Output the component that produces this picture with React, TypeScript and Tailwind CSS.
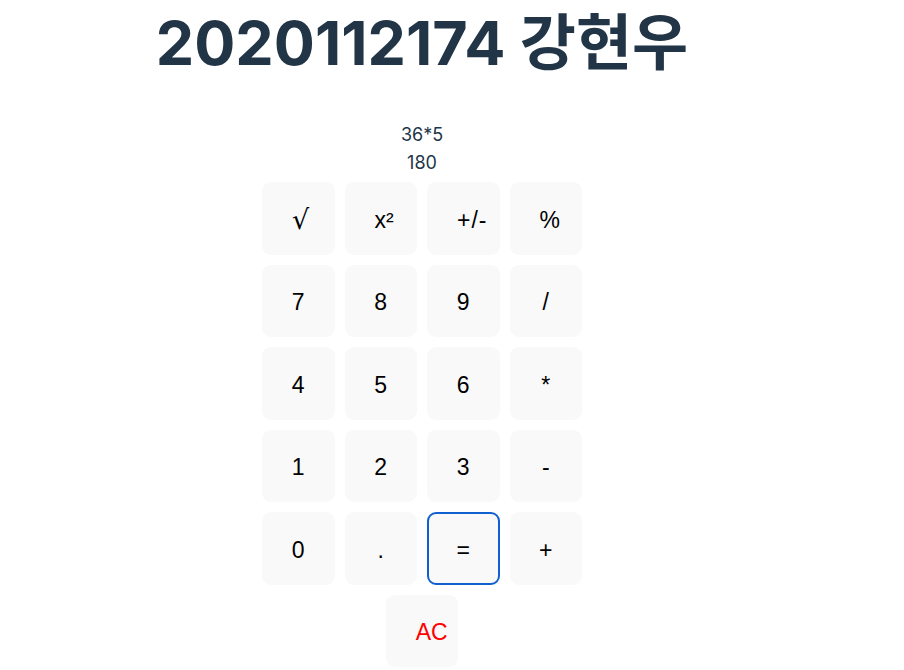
import React from "react";

const rows: string[][] = [
  ["√", "x²", "+/-", "%"],
  ["7", "8", "9", "/"],
  ["4", "5", "6", "*"],
  ["1", "2", "3", "-"],
  ["0", ".", "=", "+"],
];

const wide = new Set(["√", "x²", "+/-", "%"]);

function Key({ label }: { label: string }) {
  const focused = label === "=";
  const isWide = wide.has(label);
  const font =
    label === "√"
      ? { fontFamily: '"DejaVu Sans", sans-serif' }
      : { fontFamily: '"Liberation Sans", Arial, sans-serif' };
  return (
    <button
      style={font}
      className={
        "w-[72.5px] h-[72.5px] rounded-[9px] bg-[#f9f9f9] flex items-center pt-[3px] font-normal text-black " +
        (label === "√" ? "text-[27px] " : "text-[23px] ") +
        (isWide ? "justify-start pl-[29px] " : "justify-center ") +
        (label === "+/-" ? "tracking-[1px] " : "") +
        (focused ? "border-2 border-[#1160d0]" : "border border-transparent")
      }
    >
      {label}
    </button>
  );
}

export default function App() {
  return (
    <div
      className="w-[844px] flex flex-col items-center bg-white text-[#213547]"
      style={{ fontFamily: 'Inter, "Noto Sans CJK KR", sans-serif' }}
    >
      <h1 className="text-[61px] font-bold leading-[1.1] mt-[10px]">2020112174 강현우</h1>
      <div className="mt-[44px] text-[18px] leading-[28px] text-center [font-feature-settings:'calt'_0]">
        <div>36*5</div>
        <div>180</div>
      </div>
      <div className="mt-[5px] flex flex-col gap-[10px]">
        {rows.map((r, i) => (
          <div key={i} className="flex gap-[10px]">
            {r.map((k) => (
              <Key key={k} label={k} />
            ))}
          </div>
        ))}
        <div className="flex justify-center">
          <button
            style={{ fontFamily: '"Liberation Sans", Arial, sans-serif' }}
            className="w-[72.5px] h-[72.5px] rounded-[9px] bg-[#f9f9f9] flex items-center justify-start pl-[30px] pt-[3px] text-[23px] font-normal text-[#ff0000]"
          >
            AC
          </button>
        </div>
      </div>
    </div>
  );
}
